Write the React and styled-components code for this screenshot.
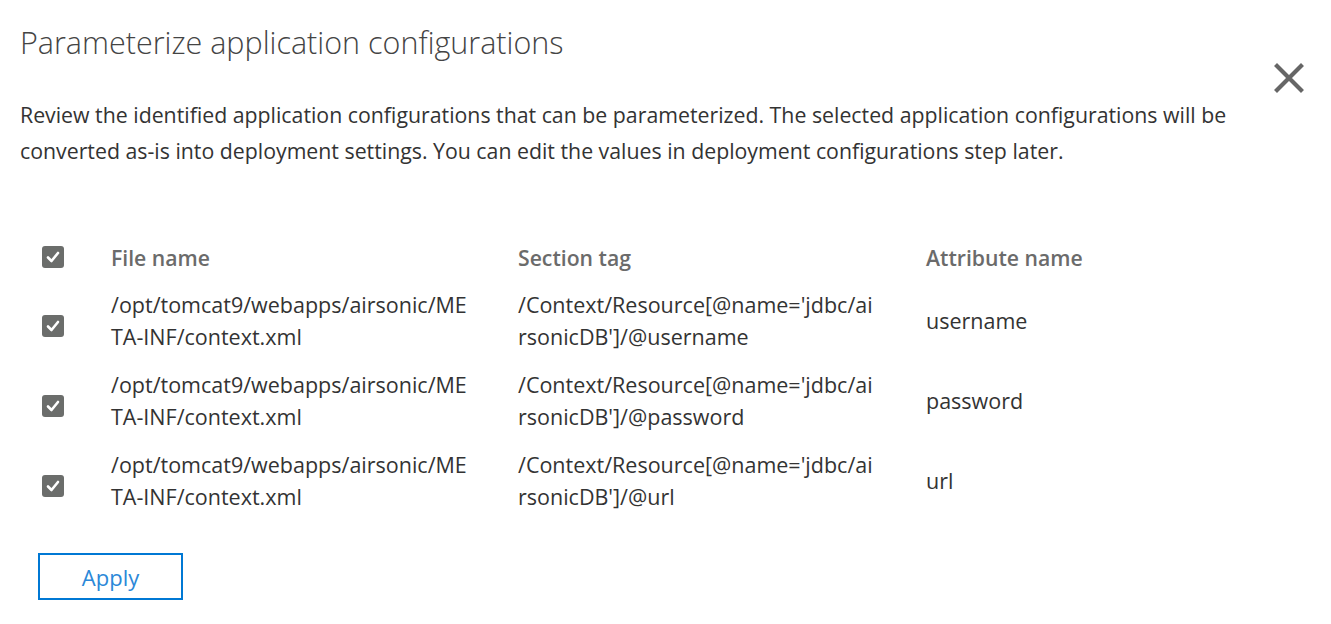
import React from "react";
import styled, { createGlobalStyle } from "styled-components";

const rows = [
  {
    file: "/opt/tomcat9/webapps/airsonic/META-INF/context.xml",
    tag: "/Context/Resource[@name='jdbc/airsonicDB']/@username",
    attr: "username",
  },
  {
    file: "/opt/tomcat9/webapps/airsonic/META-INF/context.xml",
    tag: "/Context/Resource[@name='jdbc/airsonicDB']/@password",
    attr: "password",
  },
  {
    file: "/opt/tomcat9/webapps/airsonic/META-INF/context.xml",
    tag: "/Context/Resource[@name='jdbc/airsonicDB']/@url",
    attr: "url",
  },
];

export default function App() {
  return (
    <>
      <GlobalStyle />
      <Panel>
        <Title>Parameterize application configurations</Title>
        <CloseButton aria-label="Close">
          <svg width="30" height="30" viewBox="0 0 30 30">
            <path
              d="M3 3 L27 27 M27 3 L3 27"
              stroke="#666"
              strokeWidth="4.2"
              strokeLinecap="square"
            />
          </svg>
        </CloseButton>
        <Description>
          Review the identified application configurations that can be
          parameterized. The selected application configurations will be
          <br />
          converted as-is into deployment settings. You can edit the values in
          deployment configurations step later.
        </Description>

        <Table>
          <HeadRow>
            <CheckCell>
              <CheckBox />
            </CheckCell>
            <HeadCell>File name</HeadCell>
            <HeadCell>Section tag</HeadCell>
            <HeadCell>Attribute name</HeadCell>
          </HeadRow>
          {rows.map((row) => (
            <Row key={row.attr}>
              <CheckCell $row>
                <CheckBox />
              </CheckCell>
              <Cell $width="358px">{row.file}</Cell>
              <Cell $width="358px">{row.tag}</Cell>
              <Cell>{row.attr}</Cell>
            </Row>
          ))}
        </Table>

        <ApplyButton>Apply</ApplyButton>
      </Panel>
    </>
  );
}

function CheckBox() {
  return (
    <Box>
      <svg width="18" height="18" viewBox="0 0 18 18">
        <path
          d="M4 9.5 L7.5 13 L14 5"
          fill="none"
          stroke="#fff"
          strokeWidth="2.6"
          strokeLinecap="round"
          strokeLinejoin="round"
        />
      </svg>
    </Box>
  );
}

const GlobalStyle = createGlobalStyle`
  body {
    margin: 0;
    background: #fff;
    font-family: "Open Sans", "Noto Sans", sans-serif;
  }
`;

const Panel = styled.div`
  position: relative;
  width: 1331px;
  height: 624px;
  box-sizing: border-box;
  padding: 22px 0 0 20px;
`;

const Title = styled.h1`
  margin: 0;
  font-size: 30.5px;
  font-weight: 300;
  color: #444;
  line-height: 40px;
`;

const CloseButton = styled.button`
  position: absolute;
  top: 63px;
  right: 27px;
  background: none;
  border: none;
  padding: 0;
  display: flex;
  cursor: pointer;
`;

const Description = styled.p`
  margin: 35px 0 0;
  font-size: 21.3px;
  line-height: 36px;
  color: #333;
  white-space: nowrap;
`;

const Table = styled.div`
  margin-top: 68px;
  display: flex;
  flex-direction: column;
`;

const HeadRow = styled.div`
  display: grid;
  grid-template-columns: 91px 407px 408px 1fr;
  align-items: center;
  height: 40px;
  margin-bottom: 4px;
`;

const Row = styled.div`
  display: grid;
  grid-template-columns: 91px 407px 408px 1fr;
  align-items: center;
  height: 80px;
`;

const CheckCell = styled.div`
  display: flex;
  padding-left: 22px;
  padding-top: ${(p) => (p.$row ? "9px" : "0")};
`;

const Box = styled.span`
  width: 22px;
  height: 22px;
  border-radius: 3px;
  background: #6b6d6b;
  display: flex;
  align-items: center;
  justify-content: center;
`;

const HeadCell = styled.div`
  font-size: 21.2px;
  font-weight: 600;
  color: #6b6b6b;
`;

const Cell = styled.div`
  font-size: 21.5px;
  line-height: 32px;
  color: #333;
  max-width: ${(p) => p.$width || "none"};
  word-break: ${(p) => (p.$width ? "break-all" : "normal")};
`;

const ApplyButton = styled.button`
  margin-top: 32px;
  margin-left: 18px;
  width: 145px;
  height: 47px;
  background: #fff;
  border: 2px solid #0078d4;
  color: #2b88d8;
  font-family: inherit;
  font-size: 22px;
  cursor: pointer;
`;
